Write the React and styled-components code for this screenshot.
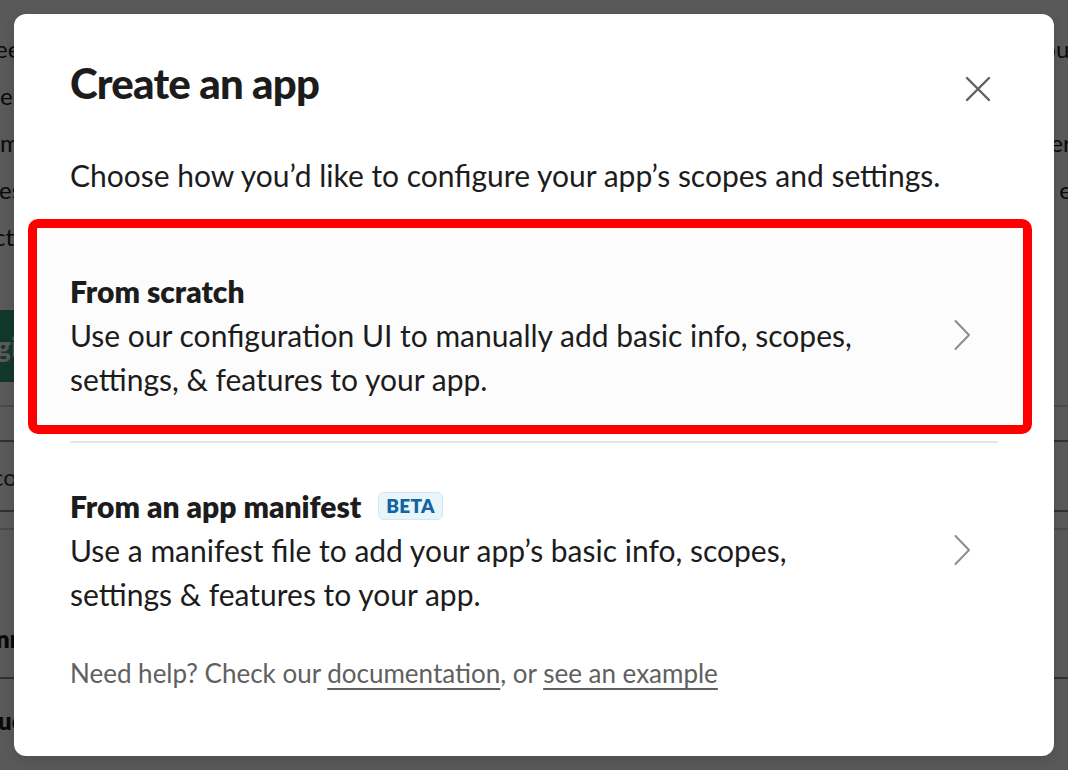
import React from 'react'
import styled, { createGlobalStyle } from 'styled-components'

const GlobalStyle = createGlobalStyle`
  html, body {
    margin: 0;
    padding: 0;
  }
  body {
    font-family: Lato, "Noto Sans", sans-serif;
    color: #1d1c1d;
  }
`

const Page = styled.div`
  position: relative;
  width: 100vw;
  height: 100vh;
  overflow: hidden;
  background: #ffffff;
`

const Background = styled.div`
  display: flex;
  flex-direction: column;
  padding-top: 25px;
  font-size: 24px;
  color: #1d1c1d;
`

const BgRow = styled.div`
  display: flex;
  justify-content: space-between;
  align-items: ${(p) => (p.bottom ? 'flex-end' : 'center')};
  height: ${(p) => p.h}px;
  padding-bottom: ${(p) => p.pb || 0}px;
  box-sizing: border-box;
  white-space: nowrap;
`

const BgLeft = styled.span`
  margin-left: ${(p) => p.shift || 0}px;
  font-weight: ${(p) => (p.bold ? 800 : 400)};
  color: ${(p) => (p.muted ? '#3a3a3a' : '#1d1c1d')};
`

const BgRight = styled.span`
  margin-right: ${(p) => p.shift || 0}px;
`

const GreenButton = styled.div`
  margin-top: 50px;
  height: 72px;
  width: 220px;
  margin-left: -8px;
  background: #36a07f;
  color: #ffffff;
  font-weight: 900;
  font-size: 28px;
  display: flex;
  align-items: center;
  padding-left: 4px;
`

const BgRule = styled.div`
  margin-top: ${(p) => p.mt}px;
  height: 2px;
  background: ${(p) => (p.dark ? '#8a8a8a' : '#d4d4d4')};
`

const Overlay = styled.div`
  position: absolute;
  inset: 0;
  background: rgba(0, 0, 0, 0.65);
  display: flex;
  align-items: center;
  justify-content: center;
`

const Modal = styled.div`
  width: 1040px;
  height: 742px;
  box-sizing: border-box;
  background: #ffffff;
  border-radius: 12px;
  padding: 44px 56px 0;
  display: flex;
  flex-direction: column;
  box-shadow: 0 4px 12px rgba(0, 0, 0, 0.12);
`

const Header = styled.div`
  display: flex;
  justify-content: space-between;
  align-items: flex-start;
`

const Title = styled.h1`
  margin: 0;
  font-size: 42px;
  line-height: 1.2;
  font-weight: 900;
  letter-spacing: -0.8px;
  color: #1d1c1d;
`

const CloseButton = styled.button`
  margin-top: 11px;
  width: 40px;
  height: 40px;
  border: none;
  background: transparent;
  padding: 0;
  display: flex;
  align-items: center;
  justify-content: center;
  color: #616061;
  cursor: pointer;
`

const Subtitle = styled.p`
  margin: 46px 0 0;
  font-size: 30px;
  line-height: 40px;
  color: #1d1c1d;
`

const OptionList = styled.div`
  margin-top: 33px;
  display: flex;
  flex-direction: column;
`

const Option = styled.div`
  position: relative;
  isolation: isolate;
  display: flex;
  align-items: center;
  padding: 41px 0 40px;
  border-bottom: ${(p) => (p.last ? 'none' : '2px solid #e6e6e6')};
  cursor: pointer;

  ${(p) =>
    p.highlighted &&
    `
    &::before {
      content: '';
      position: absolute;
      top: -9px;
      bottom: 7px;
      left: -42px;
      right: -34px;
      border: 9px solid #ff0000;
      border-radius: 10px;
      background: #fcfcfc;
      z-index: -1;
    }
  `}
`

const OptionText = styled.div`
  flex: 1;
  font-size: 30px;
  line-height: 44px;
`

const OptionTitle = styled.div`
  display: flex;
  align-items: center;
  font-weight: 800;
  color: #1d1c1d;
`

const OptionDesc = styled.div`
  color: #1d1c1d;
  max-width: 800px;
`

const Badge = styled.span`
  margin-left: 17px;
  height: 28px;
  box-sizing: border-box;
  padding: 0 7px;
  display: inline-flex;
  align-items: center;
  background: #e8f5fa;
  border: 1px solid #d2e8f3;
  border-radius: 6px;
  color: #1264a3;
  font-size: 19px;
  font-weight: 800;
  letter-spacing: 0.3px;
`

const Chevron = styled.div`
  width: 20px;
  margin-right: 26px;
  display: flex;
  justify-content: center;
  color: #8d8d8d;
`

const Footer = styled.p`
  margin: 0;
  font-size: 26px;
  line-height: 34px;
  color: #616061;
`

const FooterLink = styled.a`
  color: #616061;
  text-decoration: underline;
  text-decoration-thickness: 2px;
  text-underline-offset: 5px;
`

const CloseIcon = () => (
  <svg width="26" height="26" viewBox="0 0 26 26" fill="none">
    <path d="M2 2 L24 24 M24 2 L2 24" stroke="currentColor" strokeWidth="2.4" strokeLinecap="round" />
  </svg>
)

const ChevronIcon = () => (
  <svg width="18" height="32" viewBox="0 0 18 32" fill="none">
    <path d="M2.5 2 L16 16 L2.5 30" stroke="currentColor" strokeWidth="2" strokeLinecap="round" strokeLinejoin="round" />
  </svg>
)

const opcoes = [
  {
    id: 'scratch',
    titulo: 'From scratch',
    descricao: 'Use our configuration UI to manually add basic info, scopes, settings, & features to your app.',
    beta: false,
  },
  {
    id: 'manifest',
    titulo: 'From an app manifest',
    descricao: 'Use a manifest file to add your app’s basic info, scopes, settings & features to your app.',
    beta: true,
  },
]

export default function App() {
  const itens = opcoes.map((op, i) => (
    <Option key={op.id} highlighted={i === 0} last={i === opcoes.length - 1}>
      <OptionText>
        <OptionTitle>
          {op.titulo}
          {op.beta && <Badge>BETA</Badge>}
        </OptionTitle>
        <OptionDesc>{op.descricao}</OptionDesc>
      </OptionText>
      <Chevron>
        <ChevronIcon />
      </Chevron>
    </Option>
  ))

  return (
    <Page>
      <GlobalStyle />
      <Background>
        <BgRow h={47}>
          <BgLeft shift={-5}>eeds</BgLeft>
          <BgRight shift={-10}>your</BgRight>
        </BgRow>
        <BgRow h={47}>
          <BgLeft shift={0}>eral</BgLeft>
        </BgRow>
        <BgRow h={47}>
          <BgLeft>ment</BgLeft>
          <BgRight shift={-14}>ers</BgRight>
        </BgRow>
        <BgRow h={47}>
          <BgLeft shift={-1}>ess</BgLeft>
          <BgRight shift={-4}>e</BgRight>
        </BgRow>
        <BgRow h={47}>
          <BgLeft shift={-6}>ctt</BgLeft>
        </BgRow>
        <GreenButton>ging</GreenButton>
        <BgRule mt={23} />
        <BgRule mt={33} dark />
        <BgRow h={68}>
          <BgLeft shift={-8} muted>cos</BgLeft>
        </BgRow>
        <BgRule mt={0} dark />
        <BgRule mt={16} />
        <BgRow h={147} bottom pb={24}>
          <BgLeft shift={-4} bold>nm</BgLeft>
        </BgRow>
        <BgRule mt={0} dark />
        <BgRow h={82}>
          <BgLeft shift={-2} bold>uc</BgLeft>
        </BgRow>
      </Background>

      <Overlay>
        <Modal role="dialog">
          <Header>
            <Title>Create an app</Title>
            <CloseButton aria-label="Close">
              <CloseIcon />
            </CloseButton>
          </Header>
          <Subtitle>Choose how you’d like to configure your app’s scopes and settings.</Subtitle>
          <OptionList>{itens}</OptionList>
          <Footer>
            Need help? Check our <FooterLink href="#">documentation</FooterLink>, or{' '}
            <FooterLink href="#">see an example</FooterLink>
          </Footer>
        </Modal>
      </Overlay>
    </Page>
  )
}
